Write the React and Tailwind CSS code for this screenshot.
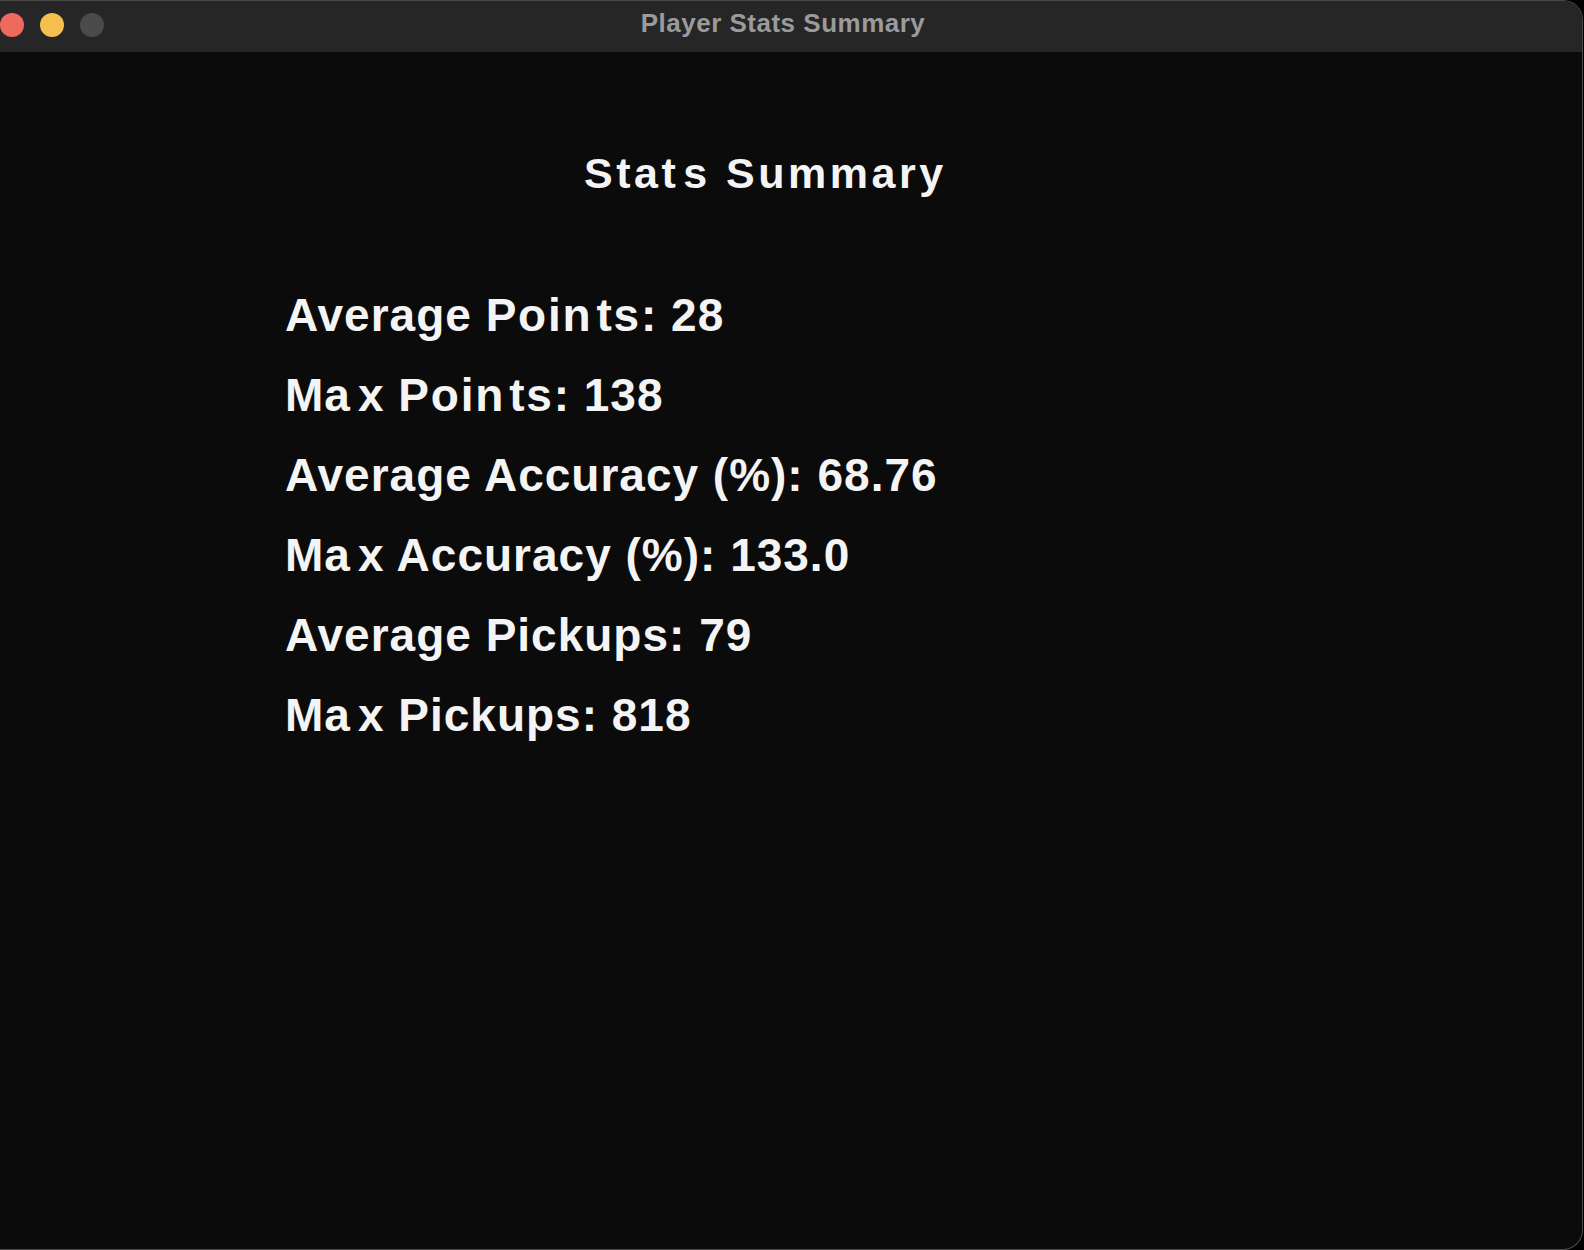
function Max() {
  return (
    <>
      Ma<span className="ml-[7px]">x</span>
    </>
  );
}

function Points() {
  return (
    <span className="tracking-[1.8px]">
      Poin<span className="ml-[4px]">ts</span>
    </span>
  );
}

export default function App() {
  const stats = [
    { k: "ap", node: (<>Average <Points />: 28</>) },
    { k: "mp", node: (<><Max /> <Points />: 138</>) },
    { k: "aa", node: (<>Average Accuracy (%): 68.76</>) },
    { k: "ma", node: (<><Max /> Accuracy (%): 133.0</>) },
    { k: "apk", node: (<>Average Pickups: 79</>) },
    { k: "mpk", node: (<><Max /> Pickups: 818</>) },
  ];
  return (
    <div className="w-[1584px] h-[1250px] bg-black overflow-hidden" style={{ fontFamily: '"Liberation Sans", Arial, sans-serif' }}>
      <div className="w-[1583px] h-[1250px] flex flex-col rounded-tr-[20px] rounded-br-[20px] overflow-hidden border-r border-t border-b border-[#4a4a4a] bg-[#0b0b0b]">
        <div className="relative h-[52px] shrink-0 bg-[#262626] border-b border-[#080808] flex items-center justify-center pb-[7px] pr-[16px]">
          <div className="absolute left-0 top-[12px] flex gap-[16px]">
            <span className="block w-[24px] h-[24px] rounded-full bg-[#ee6a5f]"></span>
            <span className="block w-[24px] h-[24px] rounded-full bg-[#f5bf4f]"></span>
            <span className="block w-[24px] h-[24px] rounded-full bg-[#4b4b4b]"></span>
          </div>
          <span className="text-[26px] leading-none font-bold text-[#9b9b9b] tracking-[0.5px]">Player Stats Summary</span>
        </div>
        <div className="flex-1 flex flex-col">
          <h1 className="mt-[99px] ml-[584px] text-[43px] leading-none font-bold text-[#f4f4f4] tracking-[3.5px]">
            Stat<span className="ml-[4px]">s</span> Summary
          </h1>
          <div className="mt-[80px] ml-[285px] flex flex-col">
            {stats.map((s) => (
              <div key={s.k} className="text-[46px] leading-[80px] font-bold text-[#f4f4f4] tracking-[1px]">{s.node}</div>
            ))}
          </div>
        </div>
      </div>
    </div>
  );
}
